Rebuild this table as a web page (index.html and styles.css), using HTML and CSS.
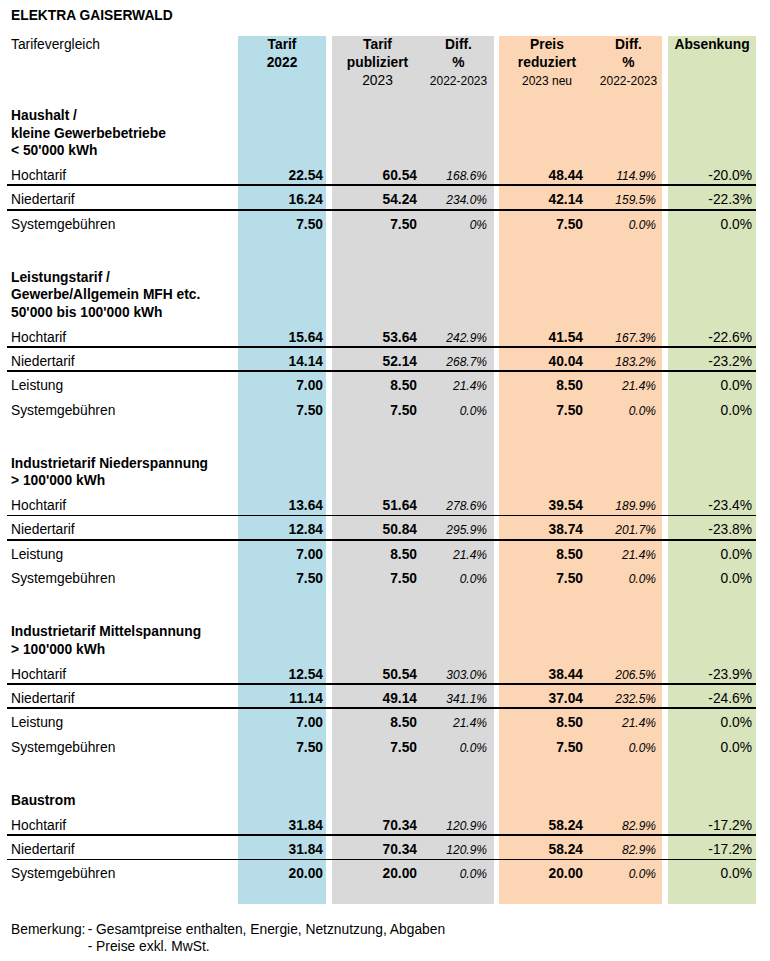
FILE: index.html
```html
<!DOCTYPE html>
<html lang="de">
<head>
<meta charset="utf-8">
<title>Elektra Gaiserwald – Tarifevergleich</title>
<link rel="stylesheet" href="styles.css">
</head>
<body>
<div class="title">ELEKTRA GAISERWALD</div>
<table class="tarife">
  <colgroup>
    <col class="c-lbl">
    <col class="c-blue">
    <col class="c-gap1">
    <col class="c-gnum">
    <col class="c-gpct">
    <col class="c-gap2">
    <col class="c-onum">
    <col class="c-opct">
    <col class="c-gap3">
    <col class="c-green">
  </colgroup>
  <thead>
    <tr class="head">
      <td class="hl">Tarifevergleich</td>
      <td><b>Tarif</b><br><b>2022</b></td>
      <td></td>
      <td><b>Tarif</b><br><b>publiziert</b><br>2023</td>
      <td><b>Diff.</b><br><b>%</b><br><span class="sm">2022-2023</span></td>
      <td></td>
      <td><b>Preis</b><br><b>reduziert</b><br><span class="sm">2023 neu</span></td>
      <td><b>Diff.</b><br><b>%</b><br><span class="sm">2022-2023</span></td>
      <td></td>
      <td><b>Absenkung</b></td>
    </tr>
  </thead>
  <tbody>
    <tr class="sec first"><td>Haushalt /<br>kleine Gewerbebetriebe<br>&lt; 50'000 kWh</td><td></td><td></td><td></td><td></td><td></td><td></td><td></td><td></td><td></td></tr>
    <tr class="l2"><td>Hochtarif</td><td>22.54</td><td></td><td>60.54</td><td>168.6%</td><td></td><td>48.44</td><td>114.9%</td><td></td><td>-20.0%</td></tr>
    <tr class="l2"><td>Niedertarif</td><td>16.24</td><td></td><td>54.24</td><td>234.0%</td><td></td><td>42.14</td><td>159.5%</td><td></td><td>-22.3%</td></tr>
    <tr><td>Systemgebühren</td><td>7.50</td><td></td><td>7.50</td><td>0%</td><td></td><td>7.50</td><td>0.0%</td><td></td><td>0.0%</td></tr>

    <tr class="sec"><td>Leistungstarif /<br>Gewerbe/Allgemein MFH etc.<br>50'000 bis 100'000 kWh</td><td></td><td></td><td></td><td></td><td></td><td></td><td></td><td></td><td></td></tr>
    <tr class="l2"><td>Hochtarif</td><td>15.64</td><td></td><td>53.64</td><td>242.9%</td><td></td><td>41.54</td><td>167.3%</td><td></td><td>-22.6%</td></tr>
    <tr class="l2"><td>Niedertarif</td><td>14.14</td><td></td><td>52.14</td><td>268.7%</td><td></td><td>40.04</td><td>183.2%</td><td></td><td>-23.2%</td></tr>
    <tr><td>Leistung</td><td>7.00</td><td></td><td>8.50</td><td>21.4%</td><td></td><td>8.50</td><td>21.4%</td><td></td><td>0.0%</td></tr>
    <tr><td>Systemgebühren</td><td>7.50</td><td></td><td>7.50</td><td>0.0%</td><td></td><td>7.50</td><td>0.0%</td><td></td><td>0.0%</td></tr>

    <tr class="sec"><td>Industrietarif Niederspannung<br>&gt; 100'000 kWh</td><td></td><td></td><td></td><td></td><td></td><td></td><td></td><td></td><td></td></tr>
    <tr class="l1"><td>Hochtarif</td><td>13.64</td><td></td><td>51.64</td><td>278.6%</td><td></td><td>39.54</td><td>189.9%</td><td></td><td>-23.4%</td></tr>
    <tr class="l2"><td>Niedertarif</td><td>12.84</td><td></td><td>50.84</td><td>295.9%</td><td></td><td>38.74</td><td>201.7%</td><td></td><td>-23.8%</td></tr>
    <tr><td>Leistung</td><td>7.00</td><td></td><td>8.50</td><td>21.4%</td><td></td><td>8.50</td><td>21.4%</td><td></td><td>0.0%</td></tr>
    <tr><td>Systemgebühren</td><td>7.50</td><td></td><td>7.50</td><td>0.0%</td><td></td><td>7.50</td><td>0.0%</td><td></td><td>0.0%</td></tr>

    <tr class="sec"><td>Industrietarif Mittelspannung<br>&gt; 100'000 kWh</td><td></td><td></td><td></td><td></td><td></td><td></td><td></td><td></td><td></td></tr>
    <tr class="l2"><td>Hochtarif</td><td>12.54</td><td></td><td>50.54</td><td>303.0%</td><td></td><td>38.44</td><td>206.5%</td><td></td><td>-23.9%</td></tr>
    <tr class="l2"><td>Niedertarif</td><td>11.14</td><td></td><td>49.14</td><td>341.1%</td><td></td><td>37.04</td><td>232.5%</td><td></td><td>-24.6%</td></tr>
    <tr><td>Leistung</td><td>7.00</td><td></td><td>8.50</td><td>21.4%</td><td></td><td>8.50</td><td>21.4%</td><td></td><td>0.0%</td></tr>
    <tr><td>Systemgebühren</td><td>7.50</td><td></td><td>7.50</td><td>0.0%</td><td></td><td>7.50</td><td>0.0%</td><td></td><td>0.0%</td></tr>

    <tr class="sec"><td>Baustrom</td><td></td><td></td><td></td><td></td><td></td><td></td><td></td><td></td><td></td></tr>
    <tr class="l2"><td>Hochtarif</td><td>31.84</td><td></td><td>70.34</td><td>120.9%</td><td></td><td>58.24</td><td>82.9%</td><td></td><td>-17.2%</td></tr>
    <tr class="l1"><td>Niedertarif</td><td>31.84</td><td></td><td>70.34</td><td>120.9%</td><td></td><td>58.24</td><td>82.9%</td><td></td><td>-17.2%</td></tr>
    <tr class="last"><td>Systemgebühren</td><td>20.00</td><td></td><td>20.00</td><td>0.0%</td><td></td><td>20.00</td><td>0.0%</td><td></td><td>0.0%</td></tr>
  </tbody>
</table>
<div class="note">
  <span class="note-k">Bemerkung:</span>
  <div class="note-v">- Gesamtpreise enthalten, Energie, Netznutzung, Abgaben<br>- Preise exkl. MwSt.</div>
</div>
</body>
</html>
```

FILE: styles.css
```css
html, body {
  background: #ffffff;
}

body {
  margin: 0;
  font-family: "Liberation Sans", Arial, sans-serif;
  font-size: 13.8px;
  color: #000000;
}

.title {
  margin: 8px 0 0;
  padding-left: 11px;
  font-weight: bold;
  line-height: 16px;
}

.tarife {
  margin: 12px 0 0 7px;
  width: 749px;
  table-layout: fixed;
  border-collapse: separate;
  border-spacing: 0;
}

.c-lbl { width: 231px; }
.c-blue { width: 88px; background: #b7dde8; }
.c-gap1 { width: 6px; }
.c-gnum { width: 91px; background: #d9d9d9; }
.c-gpct { width: 71px; background: #d9d9d9; }
.c-gap2 { width: 5px; }
.c-onum { width: 96px; background: #fcd5b4; }
.c-opct { width: 67px; background: #fcd5b4; }
.c-gap3 { width: 6px; }
.c-green { width: 88px; background: #d8e4bc; }

.tarife td {
  padding: 6px 0 2.33px;
  line-height: 16px;
  vertical-align: baseline;
  white-space: nowrap;
  text-align: right;
}

.tarife td:nth-child(1) {
  text-align: left;
  padding-left: 4px;
}

.tarife td:nth-child(3n) {
  vertical-align: top;
}

.tarife tbody td:nth-child(2) { font-weight: bold; padding-right: 3px; }
.tarife tbody td:nth-child(4) { font-weight: bold; padding-right: 6px; }
.tarife tbody td:nth-child(5) { font-style: italic; font-size: 12px; padding-right: 7px; }
.tarife tbody td:nth-child(7) { font-weight: bold; padding-right: 12px; }
.tarife tbody td:nth-child(8) { font-style: italic; font-size: 12px; padding-right: 6px; }
.tarife tbody td:nth-child(10) { padding-right: 4px; }

.tarife .head td {
  padding: 0;
  line-height: 18px;
  vertical-align: top;
  text-align: center;
  height: 54px;
}

.tarife .head td.hl {
  text-align: left;
  padding-left: 4px;
}

.sm {
  font-size: 12px;
}

.tarife .sec td {
  padding: 34px 0 2.2px;
  line-height: 17.5px;
  vertical-align: top;
  font-weight: bold;
}

.tarife .sec td:nth-child(1) {
  padding-left: 4px;
}

.tarife .sec.first td {
  padding-top: 17.3px;
}

.tarife .l2 td {
  padding-bottom: 0.33px;
  border-bottom: 2px solid #000000;
}

.tarife .l1 td {
  padding-bottom: 1.33px;
  border-bottom: 1px solid #000000;
}

.tarife .last td {
  padding-bottom: 21.2px;
}

.note {
  display: grid;
  grid-template-columns: 76.7px auto;
  padding-left: 11px;
  margin-top: 17.4px;
  line-height: 17px;
}
```
